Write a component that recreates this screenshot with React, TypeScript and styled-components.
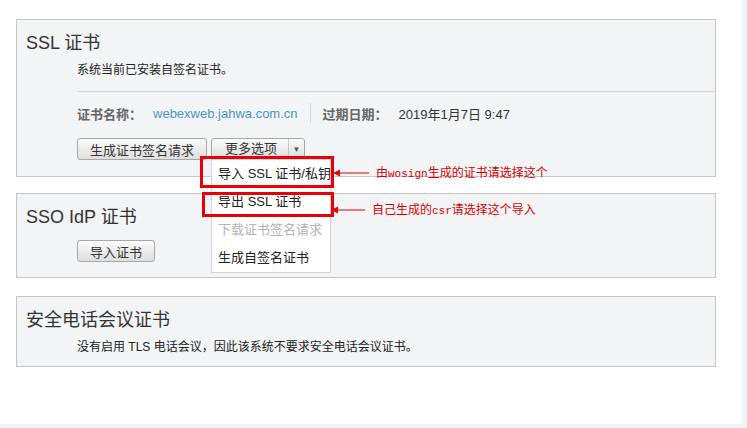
import styled, { createGlobalStyle } from "styled-components";

const GlobalStyle = createGlobalStyle`
  body {
    margin: 0;
    background: #eef3f6;
    font-family: "Liberation Sans", "Noto Sans CJK SC", sans-serif;
    color: #333;
  }
`;

const Page = styled.div`
  position: relative;
  width: 742px;
  height: 424px;
  box-sizing: border-box;
  padding: 19px 0 0 16px;
  background: #fff;
`;

const Panel = styled.section<{ $pb: number; $mb?: number }>`
  width: 700px;
  box-sizing: border-box;
  background: #f3f4f6;
  border: 1px solid #c6c6c6;
  padding: 12px 0 ${(p) => p.$pb}px 9px;
  margin-bottom: ${(p) => p.$mb ?? 16}px;
`;

const Title = styled.h2`
  margin: 0;
  font-size: 18px;
  line-height: 22px;
  font-weight: normal;
  color: #333;
`;

const Body = styled.div`
  margin-left: 51px;
`;

const Desc = styled.p`
  margin: 8px 0 0;
  font-size: 12px;
  line-height: 16px;
  color: #222;
`;

const Divider = styled.div`
  margin-top: 13px;
  border-top: 1px solid #d2d2d2;
`;

const InfoRow = styled.div`
  display: flex;
  align-items: center;
  height: 22px;
  margin-top: 10px;
  font-size: 13px;
`;

const Label = styled.span`
  font-weight: bold;
  color: #666;
  margin-right: 11px;
`;

const LinkText = styled.a`
  color: #4b94bd;
  text-decoration: none;
`;

const VSep = styled.span`
  width: 1px;
  height: 20px;
  background: #d6d6d6;
  margin: 0 12px;
`;

const Value = styled.span`
  color: #333;
`;

const ButtonRow = styled.div<{ $mt: number }>`
  display: flex;
  gap: 4px;
  margin-top: ${(p) => p.$mt}px;
`;

const Button = styled.button`
  height: 22px;
  box-sizing: border-box;
  padding: 0 12px;
  border: 1px solid #a8a8a8;
  border-radius: 3px;
  background: linear-gradient(#fbfbfb, #dedede);
  font: inherit;
  font-size: 13px;
  color: #333;
  cursor: pointer;
`;

const Split = styled.div`
  position: relative;
  display: flex;
  height: 22px;
  box-sizing: border-box;
  border: 1px solid #a8a8a8;
  border-radius: 3px;
  background: linear-gradient(#fbfbfb, #dedede);
`;

const SplitMain = styled.span`
  padding: 0 11px 0 13px;
  font-size: 13px;
  line-height: 20px;
  border-right: 1px solid #c4c4c4;
`;

const SplitArrow = styled.span`
  width: 15px;
  display: flex;
  align-items: center;
  justify-content: center;
  font-size: 8px;
  color: #555;
`;

const Menu = styled.ul`
  position: absolute;
  top: 20px;
  left: -1px;
  width: 120px;
  box-sizing: border-box;
  margin: 0;
  padding: 0;
  list-style: none;
  background: #fff;
  border: 1px solid #d4d4d4;
  z-index: 2;
`;

const MenuItem = styled.li<{ $disabled?: boolean }>`
  height: 28px;
  line-height: 28px;
  padding-left: 6px;
  font-size: 13px;
  white-space: nowrap;
  color: ${(p) => (p.$disabled ? "#b4b4b4" : "#222")};
`;

const RedBox = styled.div<{ $x: number; $y: number; $w: number; $h: number }>`
  position: absolute;
  left: ${(p) => p.$x}px;
  top: ${(p) => p.$y}px;
  width: ${(p) => p.$w}px;
  height: ${(p) => p.$h}px;
  box-sizing: border-box;
  border: 3px solid #e8000b;
  z-index: 3;
`;

const Note = styled.div<{ $x: number; $y: number }>`
  position: absolute;
  left: ${(p) => p.$x}px;
  top: ${(p) => p.$y}px;
  display: flex;
  align-items: center;
  height: 16px;
  font-size: 12px;
  color: #d60000;
  white-space: nowrap;
  z-index: 3;
`;

const NoteText = styled.span`
  line-height: 16px;
`;

const Mono = styled.span`
  font-family: "Liberation Mono", monospace;
  font-size: 11px;
`;

function Arrow({ len }: { len: number }) {
  return (
    <svg width={len} height="10" style={{ marginRight: 7 }}>
      <line x1="4" y1="5" x2={len} y2="5" stroke="#d60000" strokeWidth="1" />
      <polygon points="0,5 7,1.5 7,8.5" fill="#e8000b" />
    </svg>
  );
}

export default function App() {
  return (
    <>
      <GlobalStyle />
      <Page>
        <Panel $pb={16}>
          <Title>SSL 证书</Title>
          <Body>
            <Desc>系统当前已安装自签名证书。</Desc>
            <Divider />
            <InfoRow>
              <Label>证书名称：</Label>
              <LinkText href="#">webexweb.jahwa.com.cn</LinkText>
              <VSep />
              <Label>过期日期：</Label>
              <Value>2019年1月7日 9:47</Value>
            </InfoRow>
            <ButtonRow $mt={14}>
              <Button>生成证书签名请求</Button>
              <Split>
                <SplitMain>更多选项</SplitMain>
                <SplitArrow>▼</SplitArrow>
                <Menu>
                  <MenuItem>导入 SSL 证书/私钥</MenuItem>
                  <MenuItem>导出 SSL 证书</MenuItem>
                  <MenuItem $disabled>下载证书签名请求</MenuItem>
                  <MenuItem>生成自签名证书</MenuItem>
                </Menu>
              </Split>
            </ButtonRow>
          </Body>
        </Panel>

        <Panel $pb={15} $mb={18}>
          <Title>SSO IdP 证书</Title>
          <Body>
            <ButtonRow $mt={12}>
              <Button>导入证书</Button>
            </ButtonRow>
          </Body>
        </Panel>

        <Panel $pb={11}>
          <Title>安全电话会议证书</Title>
          <Body>
            <Desc>没有启用 TLS 电话会议，因此该系统不要求安全电话会议证书。</Desc>
          </Body>
        </Panel>

        <RedBox $x={200} $y={156} $w={134} $h={32} />
        <RedBox $x={202} $y={192} $w={132} $h={25} />
        <Note $x={333} $y={165}>
          <Arrow len={36} />
          <NoteText>
            由<Mono>wosign</Mono>生成的证书请选择这个
          </NoteText>
        </Note>
        <Note $x={331} $y={202}>
          <Arrow len={34} />
          <NoteText>
            自己生成的<Mono>csr</Mono>请选择这个导入
          </NoteText>
        </Note>
      </Page>
    </>
  );
}
